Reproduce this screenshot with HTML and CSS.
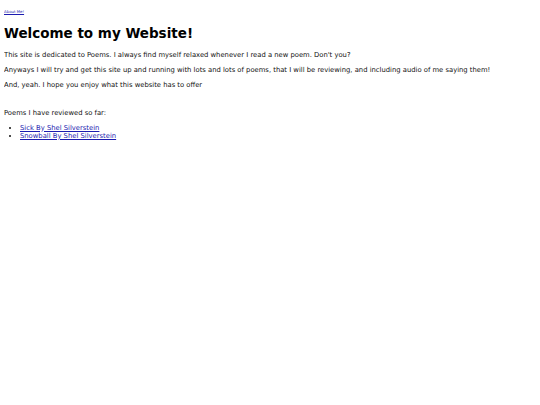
FILE: index.html
```html
<!DOCTYPE html>
<html>
<head>
<meta charset="utf-8">
<title>Poems</title>
<link rel="stylesheet" href="styles.css">
</head>
<body>
<div class="top"><a class="about" href="#">About Me!</a></div>
<h1 class="title">Welcome to my Website!</h1>
<p class="text">This site is dedicated to Poems. I always find myself relaxed whenever I read a new poem. Don't you?</p>
<p class="text">Anyways I will try and get this site up and running with lots and lots of poems, that I will be reviewing, and including audio of me saying them!</p>
<p class="text">And, yeah. I hope you enjoy what this website has to offer</p>
<p class="text spacer">&nbsp;</p>
<p class="text">Poems I have reviewed so far:</p>
<ul class="poems">
<li><a href="#">Sick By Shel Silverstein</a></li>
<li><a href="#">Snowball By Shel Silverstein</a></li>
</ul>
</body>
</html>
```
FILE: styles.css
```css
html, body {
  background: #fff;
}
body {
  margin: 4px;
  font-family: "DejaVu Sans", Verdana, sans-serif;
  font-size: 6.8px;
  color: #111;
}
a {
  color: #1c1cb0;
}
.top {
  padding: 5px 0 1.5px;
  font-size: 3.9px;
  line-height: 5px;
}
.title {
  font-size: 13.5px;
  margin: 9.5px 0;
  color: #000;
}
.text {
  margin: 7px 0;
}
.spacer {
  line-height: 6px;
}
.poems {
  margin: 7px 0;
  padding-left: 16px;
}
```
